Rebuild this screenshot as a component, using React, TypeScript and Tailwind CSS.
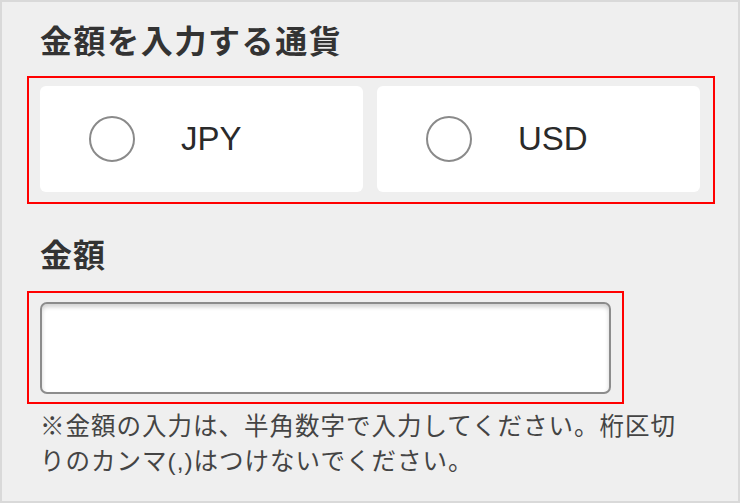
export default function App() {
  const currencies = ['JPY', 'USD'];

  return (
    <div
      className="w-[740px] h-[503px] border-2 border-[#d9d9d9] bg-[#efefef] text-[#333]"
      style={{ fontFamily: '"Liberation Sans", "Noto Sans CJK JP", sans-serif' }}
    >
      {/* Currency */}
      <div className="pl-[38px] pt-[18px]">
        <h2 className="text-[32px] leading-[44px] font-bold tracking-[1.6px] text-[#333]">
          金額を入力する通貨
        </h2>
      </div>
      <div className="ml-[25px] mt-[12px] w-[688px] h-[128px] border-2 border-[#ff0000] px-[11px] pt-[8px]">
        <div className="flex gap-[14px]">
          {currencies.map((c) => (
            <label
              key={c}
              className="flex h-[106px] w-[323px] items-center rounded-[6px] bg-white pl-[49px]"
            >
              <span className="h-[46px] w-[46px] rounded-full border-2 border-[#8a8a8a]" />
              <span className="ml-[46px] text-[33px] text-[#2a2a2a]">{c}</span>
            </label>
          ))}
        </div>
      </div>

      {/* Amount */}
      <div className="pl-[38px] pt-[30px]">
        <h2 className="text-[32px] leading-[44px] font-bold tracking-[1px] text-[#333]">金額</h2>
      </div>
      <div className="ml-[25px] mt-[13px] w-[597px] h-[113px] border-2 border-[#ff0000] px-[11px] pt-[9px]">
        <input
          type="text"
          className="block h-[92px] w-[571px] rounded-[7px] border-2 border-[#8c8c8c] bg-white shadow-[inset_0_3px_4px_rgba(0,0,0,0.18)] outline-none"
        />
      </div>
      <p className="pl-[38px] pt-[5px] text-[24.5px] leading-[35px] tracking-[1px] text-[#444]">
        ※金額の入力は、半角数字で入力してください。桁区切
        <br />
        りのカンマ(,)はつけないでください。
      </p>
    </div>
  );
}
